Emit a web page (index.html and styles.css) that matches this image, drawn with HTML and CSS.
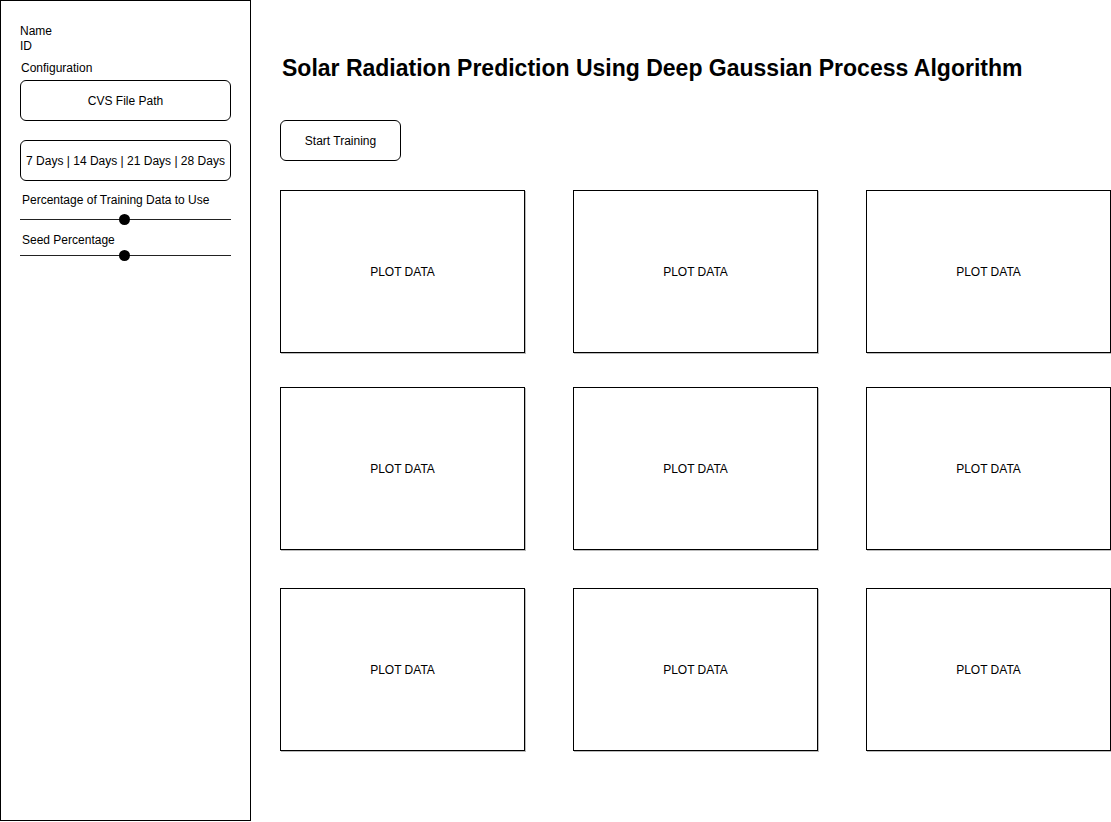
FILE: index.html
```html
<!DOCTYPE html>
<html>
<head>
<meta charset="utf-8">
<link rel="stylesheet" href="styles.css">
</head>
<body>
<div class="page">
  <aside class="sidebar">
    <div class="line">Name</div>
    <div class="line">ID</div>
    <div class="line config">Configuration</div>
    <div class="field field-path">CVS File Path</div>
    <div class="field field-days">7 Days | 14 Days | 21 Days | 28 Days</div>
    <div class="line label label-first">Percentage of Training Data to Use</div>
    <div class="slider slider-first"><span class="knob"></span></div>
    <div class="line label label-second">Seed Percentage</div>
    <div class="slider slider-second"><span class="knob"></span></div>
  </aside>
  <main class="main">
    <h1 class="title">Solar Radiation Prediction Using Deep Gaussian Process Algorithm</h1>
    <div class="button">Start Training</div>
    <div class="grid">
      <div class="plot">PLOT DATA</div>
      <div class="plot">PLOT DATA</div>
      <div class="plot">PLOT DATA</div>
      <div class="plot">PLOT DATA</div>
      <div class="plot">PLOT DATA</div>
      <div class="plot">PLOT DATA</div>
      <div class="plot row3">PLOT DATA</div>
      <div class="plot row3">PLOT DATA</div>
      <div class="plot row3">PLOT DATA</div>
    </div>
  </main>
</div>
</body>
</html>
```
FILE: styles.css
```css
html, body {
  margin: 0;
  padding: 0;
  background: #fff;
}
body {
  font-family: "Liberation Sans", Arial, sans-serif;
  font-size: 12px;
  color: #000;
}
.page {
  display: flex;
  align-items: flex-start;
}
.sidebar {
  box-sizing: border-box;
  width: 251px;
  height: 821px;
  border: 1px solid #000;
  padding: 23px 0 0 19px;
  display: flex;
  flex-direction: column;
  flex-shrink: 0;
}
.line {
  line-height: 15px;
  height: 15px;
}
.config {
  margin-top: 7px;
  margin-left: 1px;
}
.field {
  box-sizing: border-box;
  width: 211px;
  height: 41px;
  border: 1px solid #000;
  border-radius: 6px;
  display: flex;
  align-items: center;
  justify-content: center;
  white-space: nowrap;
}
.field-path {
  margin-top: 4px;
}
.field-days {
  margin-top: 19px;
}
.label {
  margin-left: 2px;
}
.label-first {
  margin-top: 12px;
}
.label-second {
  margin-top: 7px;
}
.slider {
  position: relative;
  width: 211px;
  height: 12px;
}
.slider::before {
  content: "";
  position: absolute;
  left: 0;
  right: 0;
  top: 5px;
  height: 1px;
  background: #222;
}
.slider-first {
  margin-top: 6px;
}
.slider-second {
  margin-top: 2px;
}
.knob {
  position: absolute;
  left: 99px;
  top: 0;
  width: 11px;
  height: 11px;
  border-radius: 50%;
  background: #000;
}
.main {
  padding-left: 29px;
  display: flex;
  flex-direction: column;
  align-items: flex-start;
}
.title {
  margin: 55px 0 0 2px;
  font-size: 23px;
  line-height: 26px;
  font-weight: bold;
  white-space: nowrap;
}
.button {
  box-sizing: border-box;
  margin-top: 39px;
  width: 121px;
  height: 41px;
  border: 1px solid #000;
  border-radius: 6px;
  display: flex;
  align-items: center;
  justify-content: center;
}
.grid {
  margin-top: 29px;
  display: grid;
  grid-template-columns: repeat(3, 245px);
  grid-auto-rows: 163px;
  column-gap: 48px;
  row-gap: 34px;
}
.plot {
  box-sizing: border-box;
  border: 1px solid #000;
  box-shadow: 1px 1px 0 #bbb;
  display: flex;
  align-items: center;
  justify-content: center;
}
.row3 {
  margin-top: 4px;
  margin-bottom: -4px;
}
```
